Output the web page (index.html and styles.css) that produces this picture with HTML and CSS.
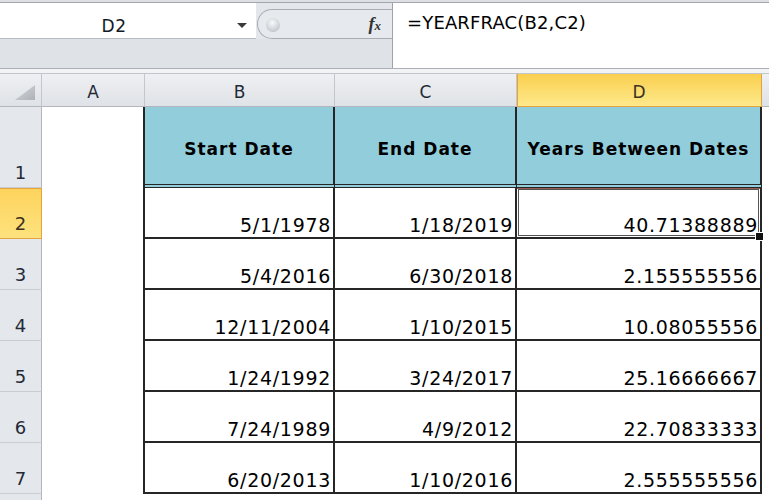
FILE: index.html
```
<!DOCTYPE html>
<html>
<head>
<meta charset="utf-8">
<link rel="stylesheet" href="styles.css">
</head>
<body>
<div class="app">
  <div class="topline"></div>
  <div class="fbar">
    <div class="fb-left">
      <div class="fb-row1">
        <div class="namebox"><span class="nb-text">D2</span><span class="nb-arrow"></span></div>
        <div class="ctrl">
          <div class="pill"><span class="knob"></span><span class="fx">f<span class="fx-x">x</span></span></div>
        </div>
      </div>
      <div class="fb-row2"></div>
    </div>
    <div class="formula">=YEARFRAC(B2,C2)</div>
  </div>
  <div class="sep"></div>
  <div class="sheet">
    <div class="ch corner"><svg width="20" height="15" viewBox="0 0 20 15"><defs><linearGradient id="tg" x1="0" y1="0" x2="1" y2="1"><stop offset="0" stop-color="#d3d6da"/><stop offset="1" stop-color="#aeb2b8"/></linearGradient></defs><polygon points="20,0 20,15 0,15" fill="url(#tg)"/></svg></div>
    <div class="ch">A</div>
    <div class="ch">B</div>
    <div class="ch">C</div>
    <div class="ch ch-sel">D</div>
    <div class="ch ch-end"></div>

    <div class="rh">1</div><div class="a"></div>
    <div class="hd">Start Date</div><div class="hd">End Date</div><div class="hd">Years Between Dates</div><div class="e"></div>

    <div class="rh rh-sel">2</div><div class="a"></div>
    <div class="num">5/1/1978</div><div class="num">1/18/2019</div><div class="num sel">40.71388889</div><div class="e"></div>

    <div class="rh">3</div><div class="a"></div>
    <div class="num">5/4/2016</div><div class="num">6/30/2018</div><div class="num">2.155555556</div><div class="e"></div>

    <div class="rh">4</div><div class="a"></div>
    <div class="num">12/11/2004</div><div class="num">1/10/2015</div><div class="num">10.08055556</div><div class="e"></div>

    <div class="rh">5</div><div class="a"></div>
    <div class="num">1/24/1992</div><div class="num">3/24/2017</div><div class="num">25.16666667</div><div class="e"></div>

    <div class="rh">6</div><div class="a"></div>
    <div class="num">7/24/1989</div><div class="num">4/9/2012</div><div class="num">22.70833333</div><div class="e"></div>

    <div class="rh">7</div><div class="a"></div>
    <div class="num">6/20/2013</div><div class="num">1/10/2016</div><div class="num">2.555555556</div><div class="e"></div>

    <div class="rh rh-last"></div><div class="blank"></div>
  </div>
</div>
</body>
</html>
```
FILE: styles.css
```
* { box-sizing: border-box; }
body {
  margin: 0;
  width: 769px;
  height: 500px;
  overflow: hidden;
  background: #fff;
  font-family: "DejaVu Sans", sans-serif;
  color: #000;
}
.topline {
  height: 3px;
  background: #dcdfe3;
  border-bottom: 1px solid #a3a7ad;
}
.fbar {
  display: flex;
  height: 65px;
}
.fb-left {
  width: 392px;
  display: flex;
  flex-direction: column;
}
.fb-row1 {
  height: 36px;
  display: flex;
}
.namebox {
  width: 256px;
  background: #fff;
  border-bottom: 1px solid #b7bbc1;
  display: flex;
  align-items: flex-start;
}
.nb-text {
  width: 228px;
  padding-top: 13px;
  text-align: center;
  font-size: 17px;
  line-height: 20px;
  letter-spacing: 0.5px;
  color: #111a26;
}
.nb-arrow {
  margin-left: 9px;
  margin-top: 20px;
  width: 0;
  height: 0;
  border-left: 5px solid transparent;
  border-right: 5px solid transparent;
  border-top: 5px solid #3a3a3a;
}
.ctrl {
  flex: 1;
  background: #e3e6ea;
  padding-top: 6px;
  display: flex;
}
.pill {
  flex: 1;
  margin-left: 1px;
  border: 1px solid #a9adb3;
  border-right: none;
  border-radius: 15px 0 0 15px;
  background: #e6e9ed;
  display: flex;
  align-items: center;
}
.knob {
  width: 14px;
  height: 14px;
  margin-left: 8px;
  margin-top: 2px;
  border-radius: 50%;
  background: radial-gradient(circle at 45% 35%, #f7f8f9 0%, #d2d5d9 55%, #aeb2b7 100%);
}
.fx {
  margin-left: auto;
  margin-right: 11px;
  margin-top: 1px;
  font-family: "Liberation Serif", serif;
  font-style: italic;
  font-weight: bold;
  font-size: 18px;
  color: #333;
}
.fx-x {
  font-size: 13px;
}
.fb-row2 {
  flex: 1;
  background: #dfe2e7;
}
.formula {
  flex: 1;
  border-left: 1px solid #9fa3a9;
  background: #fff;
  padding: 10px 0 0 14px;
  font-size: 18px;
  line-height: 20px;
  letter-spacing: 0.15px;
  color: #000;
}
.sep {
  height: 6px;
  border-top: 1px solid #acb0b6;
  border-bottom: 1px solid #c2c6cc;
  background: #f1f3f5;
}
.sheet {
  display: grid;
  grid-template-columns: 42px 103px 190px 182px 245px 1fr;
  grid-template-rows: 33px 81px repeat(6, 51px) 1fr;
  height: 426px;
}
.ch {
  background: linear-gradient(#eef0f3, #dfe2e6);
  border-right: 1px solid #c3c7cd;
  border-bottom: 1px solid #b3b7bd;
  display: flex;
  align-items: center;
  justify-content: center;
  padding-top: 3px;
  font-size: 17px;
  color: #1f2a36;
}
.ch-sel {
  background: linear-gradient(#f9cf4e, #fee98c);
  border-right-color: #e3a33d;
  border-bottom-color: #e3a33d;
  box-shadow: inset 1px 0 0 #e3a33d;
  color: #3b3220;
}
.ch-end {
  border-right: none;
}
.corner {
  justify-content: flex-end;
  align-items: flex-end;
  padding: 0 6px 6px 0;
}
.corner svg {
  display: block;
}
.rh {
  background: #e4e7eb;
  border-right: 1px solid #b3b7bd;
  border-bottom: 1px solid #c9cdd2;
  display: flex;
  align-items: flex-end;
  justify-content: center;
  padding-bottom: 3px;
  font-size: 18px;
  line-height: 22px;
  color: #1f2a36;
}
.rh-sel {
  background: linear-gradient(#fdd35c, #fee27e);
  border-right-color: #e3a33d;
  border-bottom-color: #e3a33d;
  box-shadow: inset 0 1px 0 #e3a33d;
  color: #3b3220;
}
.rh-last {
  border-bottom: none;
}
.a {
  background: #fff;
  border-right: 2px solid #262626;
}
.e, .blank {
  background: #fff;
}
.blank {
  grid-column: 2 / -1;
}
.hd {
  background: #92cddc;
  border-right: 2px solid #262626;
  border-bottom: 4px double #262626;
  display: flex;
  align-items: center;
  justify-content: center;
  padding-top: 6px;
  font-weight: bold;
  font-size: 17px;
  letter-spacing: 1px;
  white-space: nowrap;
  color: #000;
}
.num {
  border-right: 2px solid #262626;
  border-bottom: 2px solid #262626;
  display: flex;
  align-items: flex-end;
  justify-content: flex-end;
  padding: 0 2px 1px 0;
  font-size: 19px;
  line-height: 22px;
  letter-spacing: 0.7px;
  color: #000;
  white-space: nowrap;
}
.sel {
  position: relative;
  box-shadow: inset 0 1px 0 #9a5c52, inset 0 0 0 1px #fff, inset 0 0 0 2px #555;
}
.sel::after {
  content: "";
  position: absolute;
  right: -4px;
  bottom: -4px;
  width: 7px;
  height: 7px;
  background: #111;
  border: 1px solid #fff;
}
```
